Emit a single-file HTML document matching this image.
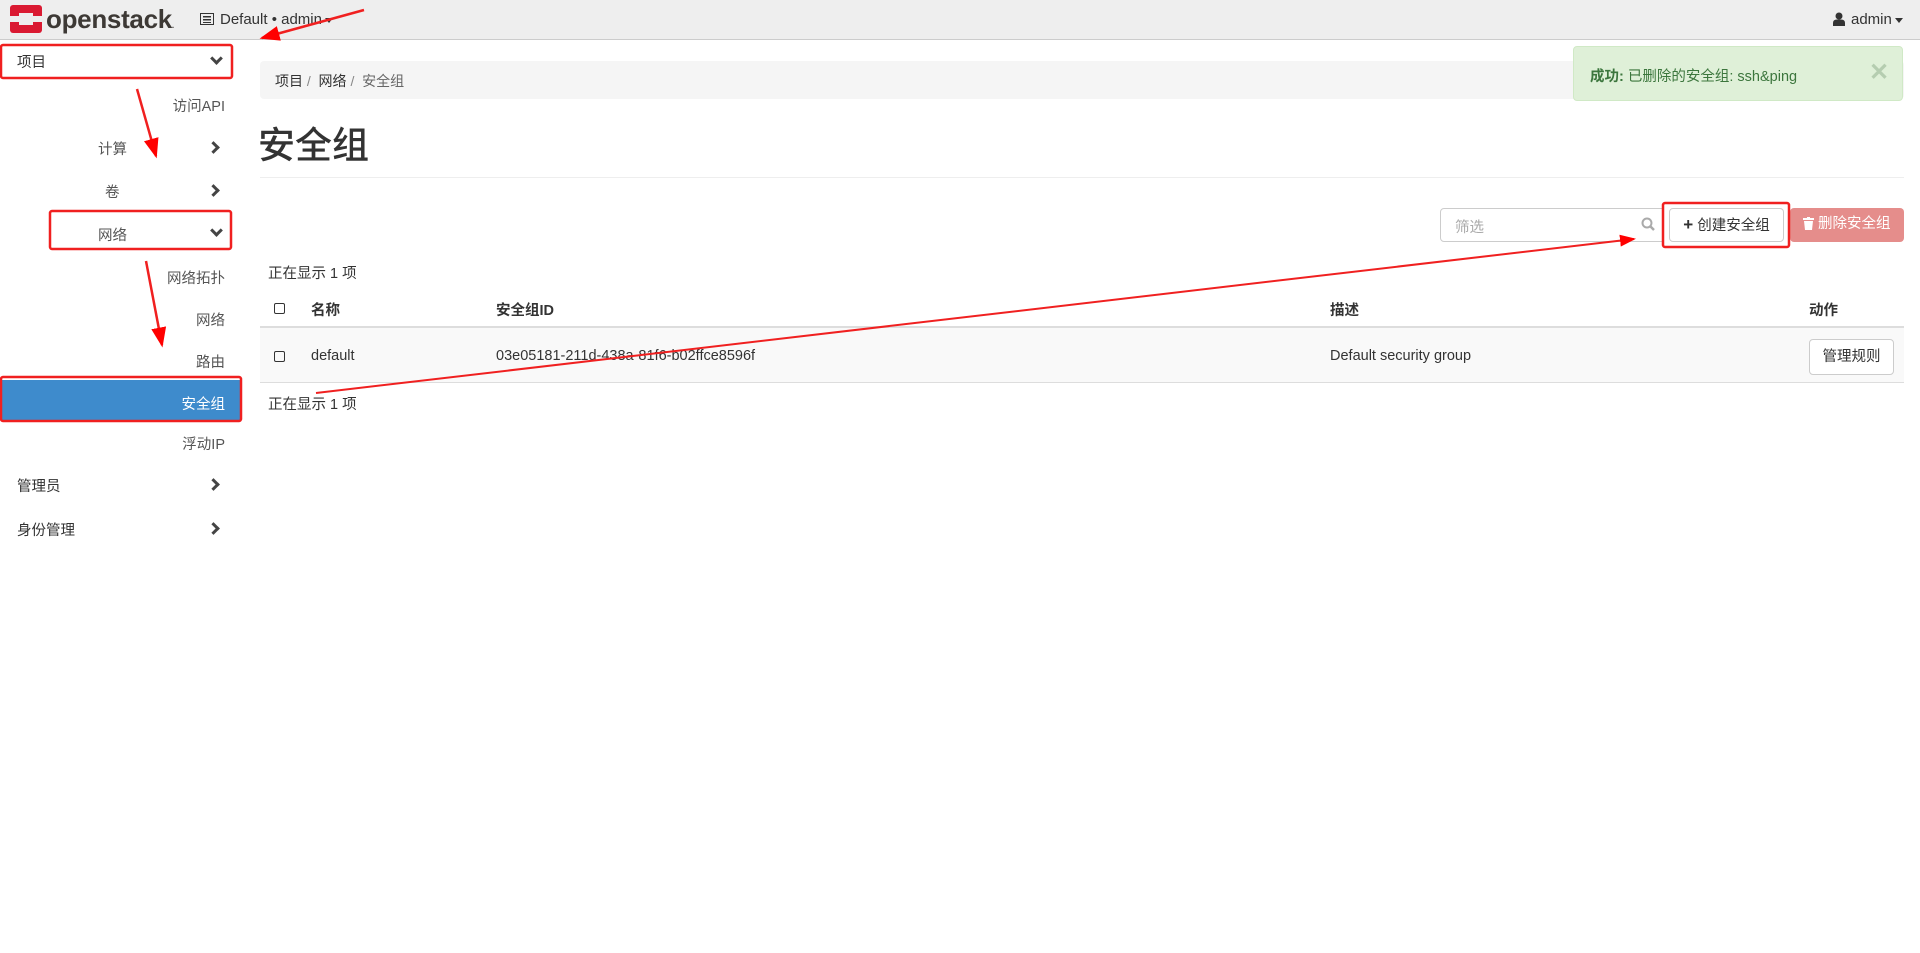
<!DOCTYPE html>
<html><head><meta charset="utf-8"><style>
*{box-sizing:border-box;margin:0;padding:0}
body{width:1920px;height:953px;overflow:hidden;background:#fff;font-family:"Liberation Sans","Noto Sans CJK SC",sans-serif;font-size:14.5px;color:#333;position:relative}
.abs{position:absolute;white-space:nowrap}
.top{position:absolute;left:0;top:0;width:1920px;height:40px;background:#eee;border-bottom:1px solid #ccc}
.chev{position:absolute;width:9px;height:9px;border-right:3px solid #444;border-bottom:3px solid #444}
.r{transform:rotate(-45deg)}.d{transform:rotate(45deg)}
.sub{position:absolute;right:1695px;white-space:nowrap;color:#555}
.caret{display:inline-block;width:0;height:0;border-left:4px solid transparent;border-right:4px solid transparent;border-top:5px solid #333;vertical-align:middle;margin-left:3px}
</style></head><body>
<div class="top"></div>
<svg class="abs" style="left:10px;top:5px" width="32" height="28" viewBox="0 0 32 28"><rect x="0" y="0" width="32" height="28" rx="3" fill="#da1a32"/><rect x="9" y="8" width="14" height="12" fill="#eee"/><rect x="0" y="11" width="9" height="6" fill="#eee"/><rect x="23" y="11" width="9" height="6" fill="#eee"/></svg>
<div class="abs" style="left:46px;top:4px;font-size:26px;color:#3d3935;font-weight:bold;letter-spacing:-0.3px">openstack<span style="font-size:8px">.</span></div>
<svg class="abs" style="left:200px;top:13px" width="14" height="12"><rect x="0.5" y="0.5" width="13" height="11" fill="none" stroke="#333"/><rect x="3" y="3" width="8" height="1.5" fill="#333"/><rect x="3" y="6" width="8" height="1.5" fill="#333"/><rect x="3" y="9" width="8" height="1" fill="#333"/></svg>
<div class="abs" style="left:220px;top:11px;font-size:15px">Default • admin<span class="caret"></span></div>
<svg class="abs" style="left:1833px;top:12px" width="12" height="14"><circle cx="6" cy="4" r="3.5" fill="#333"/><path d="M0,14 L0,11 Q0,7.5 4,7.5 L8,7.5 Q12,7.5 12,11 L12,14 Z" fill="#333"/></svg>
<div class="abs" style="left:1851px;top:11px;font-size:15px">admin<span class="caret"></span></div>

<!-- sidebar -->
<div class="abs" style="left:17px;top:51px">项目</div><div class="chev d" style="left:212px;top:54px"></div>
<div class="sub" style="top:95px">访问API</div>
<div class="abs" style="left:98px;top:138px;color:#555">计算</div><div class="chev r" style="left:209px;top:143px"></div>
<div class="abs" style="left:105px;top:181px;color:#555">卷</div><div class="chev r" style="left:209px;top:186px"></div>
<div class="abs" style="left:98px;top:224px;color:#555">网络</div><div class="chev d" style="left:212px;top:226px"></div>
<div class="sub" style="top:267px">网络拓扑</div>
<div class="sub" style="top:309px">网络</div>
<div class="sub" style="top:351px">路由</div>
<div class="abs" style="left:0;top:380px;width:240px;height:40px;background:#3e8bcc"></div>
<div class="sub" style="top:393px;color:#fff">安全组</div>
<div class="sub" style="top:433px">浮动IP</div>
<div class="abs" style="left:17px;top:475px">管理员</div><div class="chev r" style="left:209px;top:480px"></div>
<div class="abs" style="left:17px;top:519px">身份管理</div><div class="chev r" style="left:209px;top:524px"></div>

<!-- main -->
<div class="abs" style="left:260px;top:61px;width:1644px;height:38px;background:#f5f5f5;border-radius:4px"></div>
<div class="abs" style="left:275px;top:71px;font-size:14px">项目 <span style="color:#888">/</span>&nbsp; 网络 <span style="color:#888">/</span>&nbsp; <span style="color:#666">安全组</span></div>
<div class="abs" style="left:258px;top:115px;font-size:37px;font-weight:500">安全组</div>
<div class="abs" style="left:260px;top:177px;width:1644px;border-top:1px solid #eee"></div>
<div class="abs" style="left:1440px;top:208px;width:223px;height:34px;border:1px solid #ccc;border-radius:4px 0 0 4px"></div>
<div class="abs" style="left:1455px;top:216px;color:#aaa">筛选</div>
<svg class="abs" style="left:1641px;top:217px" width="14" height="14"><circle cx="6" cy="6" r="4.5" fill="none" stroke="#aaa" stroke-width="2"/><line x1="9" y1="9" x2="13" y2="13" stroke="#aaa" stroke-width="2.5"/></svg>
<div class="abs" style="left:1669px;top:208px;width:115px;height:34px;border:1px solid #ccc;border-radius:4px;background:#fff;text-align:center;line-height:32px"><b style="font-size:17px">+</b> 创建安全组</div>
<div class="abs" style="left:1790px;top:208px;width:114px;height:34px;border-radius:4px;background:#e58d8b;color:#fff;line-height:33px;padding-left:13px"><svg width="11" height="13" style="vertical-align:-2px"><rect x="0" y="1" width="11" height="2" fill="#fff"/><rect x="4" y="0" width="3" height="2" fill="#fff"/><path d="M1,4 L10,4 L9,13 L2,13 Z" fill="#fff"/></svg> 删除安全组</div>
<div class="abs" style="left:268px;top:262px">正在显示 1 项</div>
<div class="abs" style="left:260px;top:326px;width:1644px;border-top:2px solid #ddd"></div>
<div class="abs" style="left:260px;top:328px;width:1644px;height:55px;background:#f9f9f9;border-bottom:1px solid #ddd"></div>
<div class="abs" style="left:274px;top:303px;width:11px;height:11px;border:1.5px solid #333;border-radius:2px"></div>
<div class="abs" style="left:311px;top:299px;font-weight:bold">名称</div>
<div class="abs" style="left:496px;top:299px;font-weight:bold">安全组ID</div>
<div class="abs" style="left:1330px;top:299px;font-weight:bold">描述</div>
<div class="abs" style="left:1809px;top:299px;font-weight:bold">动作</div>
<div class="abs" style="left:274px;top:351px;width:11px;height:11px;border:1.5px solid #333;border-radius:2px"></div>
<div class="abs" style="left:311px;top:348px">default</div>
<div class="abs" style="left:496px;top:348px">03e05181-211d-438a-81f6-b02ffce8596f</div>
<div class="abs" style="left:1330px;top:348px">Default security group</div>
<div class="abs" style="left:1809px;top:339px;width:85px;height:36px;border:1px solid #ccc;border-radius:4px;background:#fff;text-align:center;line-height:34px">管理规则</div>
<div class="abs" style="left:268px;top:393px">正在显示 1 项</div>

<!-- alert -->
<div class="abs" style="left:1573px;top:46px;width:330px;height:55px;background:#dff0d8;border:1px solid #d0e9c6;border-radius:4px"></div>
<div class="abs" style="left:1590px;top:65px;color:#3c763d"><b>成功:</b> 已删除的安全组: ssh&amp;ping</div>
<div class="abs" style="left:1869px;top:58px;color:#b5cdb0;font-size:24px;font-weight:bold">✕</div>

<!-- annotations -->
<svg class="abs" style="left:0;top:0" width="1920" height="953">
<defs><marker id="a" markerWidth="8" markerHeight="6" refX="7" refY="3" orient="auto"><path d="M0,0 L8,3 L0,6 z" fill="#f00"/></marker></defs>
<g fill="none" stroke="#f02020" stroke-width="2.5">
<rect x="1" y="45" width="231" height="33" rx="2"/>
<rect x="50" y="211" width="181" height="38" rx="2"/>
<rect x="1" y="377" width="240" height="44" rx="2"/>
<rect x="1663" y="203" width="126" height="44" rx="2"/>
</g>
<g stroke="#f02020" stroke-width="2.5" marker-end="url(#a)">
<line x1="364" y1="10" x2="262" y2="38"/>
<line x1="137" y1="89" x2="156" y2="156"/>
<line x1="146" y1="261" x2="162" y2="345"/>
<line x1="316" y1="393" x2="1634" y2="239" stroke-width="2"/>
</g>
</svg>
</body></html>
